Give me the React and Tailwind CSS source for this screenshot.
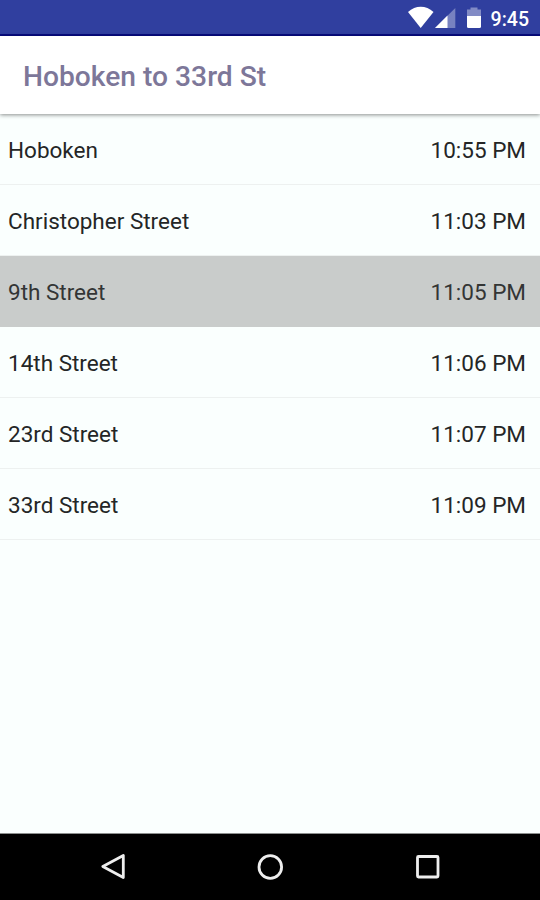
const stops = [
    { name: 'Hoboken', time: '10:55 PM' },
    { name: 'Christopher Street', time: '11:03 PM' },
    { name: '9th Street', time: '11:05 PM', current: true },
    { name: '14th Street', time: '11:06 PM' },
    { name: '23rd Street', time: '11:07 PM' },
    { name: '33rd Street', time: '11:09 PM' },
];

const StatusBar = () => (
    <div className="flex h-9 shrink-0 items-center justify-end border-b-2 border-[#070b80] bg-[#303f9f] pr-[11px] text-white">
        {/* Wifi, signal and battery */}
        <svg className="h-9 w-[76px] shrink-0" viewBox="0 0 76 36" fill="currentColor">
            <path d="M0 13C7.500 6 18 6 25.500 13L12.700 29Z" />
            <path d="M47.300 9V29H27Z" opacity="0.35" />
            <path d="M39.500 16.500V29H27Z" />
            <path d="M59 10.500H62.500V8.500H69.500V10.500H73V17H59Z" opacity="0.4" />
            <path d="M59 17H73V27.500Q73 29 71.500 29H60.500Q59 29 59 27.500Z" />
        </svg>
        <span className="ml-[7px] pt-[5px] text-[19.5px] leading-8 font-medium">9:45</span>
    </div>
);

const StopRow = ({ stop }) => (
    <li
        className={`flex h-[71px] items-center justify-between border-b pt-[3px] pr-[14px] pl-2 text-[22.5px] ${
            stop.current ? 'border-[#c9cccb] bg-[#c9cccb] text-[#333535]' : 'border-[#edf1f0] text-[#242626]'
        }`}
    >
        <span>{stop.name}</span>
        <span>{stop.time}</span>
    </li>
);

const NavBar = () => (
    <div className="flex h-[67px] shrink-0 justify-center border-t border-[#8c8f8e] bg-black text-[#eeeeee]">
        <svg className="h-[66px] w-[540px]" viewBox="0 0 540 66" fill="none" stroke="currentColor" strokeWidth="2.800">
            <path d="M123.300 21.500V43.500L102.800 32.500Z" strokeLinejoin="round" />
            <circle cx="270.300" cy="33" r="11.300" />
            <rect x="417.500" y="22.500" width="20.500" height="20.500" rx="1" />
        </svg>
    </div>
);

const App = () => (
    <div className="flex h-screen flex-col bg-[#fafffe] font-['Roboto',sans-serif]">
        <StatusBar />

        {/* Header */}
        <header className="z-10 flex h-[78px] shrink-0 items-center bg-white pt-1 pl-[23px] shadow-[0_1px_4px_rgba(0,0,0,0.45)]">
            <h1 className="text-[28.2px] font-medium text-[#7d7799]">Hoboken to 33rd St</h1>
        </header>

        {/* Stops */}
        <ul className="flex-1">
            {stops.map((stop) => (
                <StopRow key={stop.name} stop={stop} />
            ))}
        </ul>

        <NavBar />
    </div>
);

export default App;
